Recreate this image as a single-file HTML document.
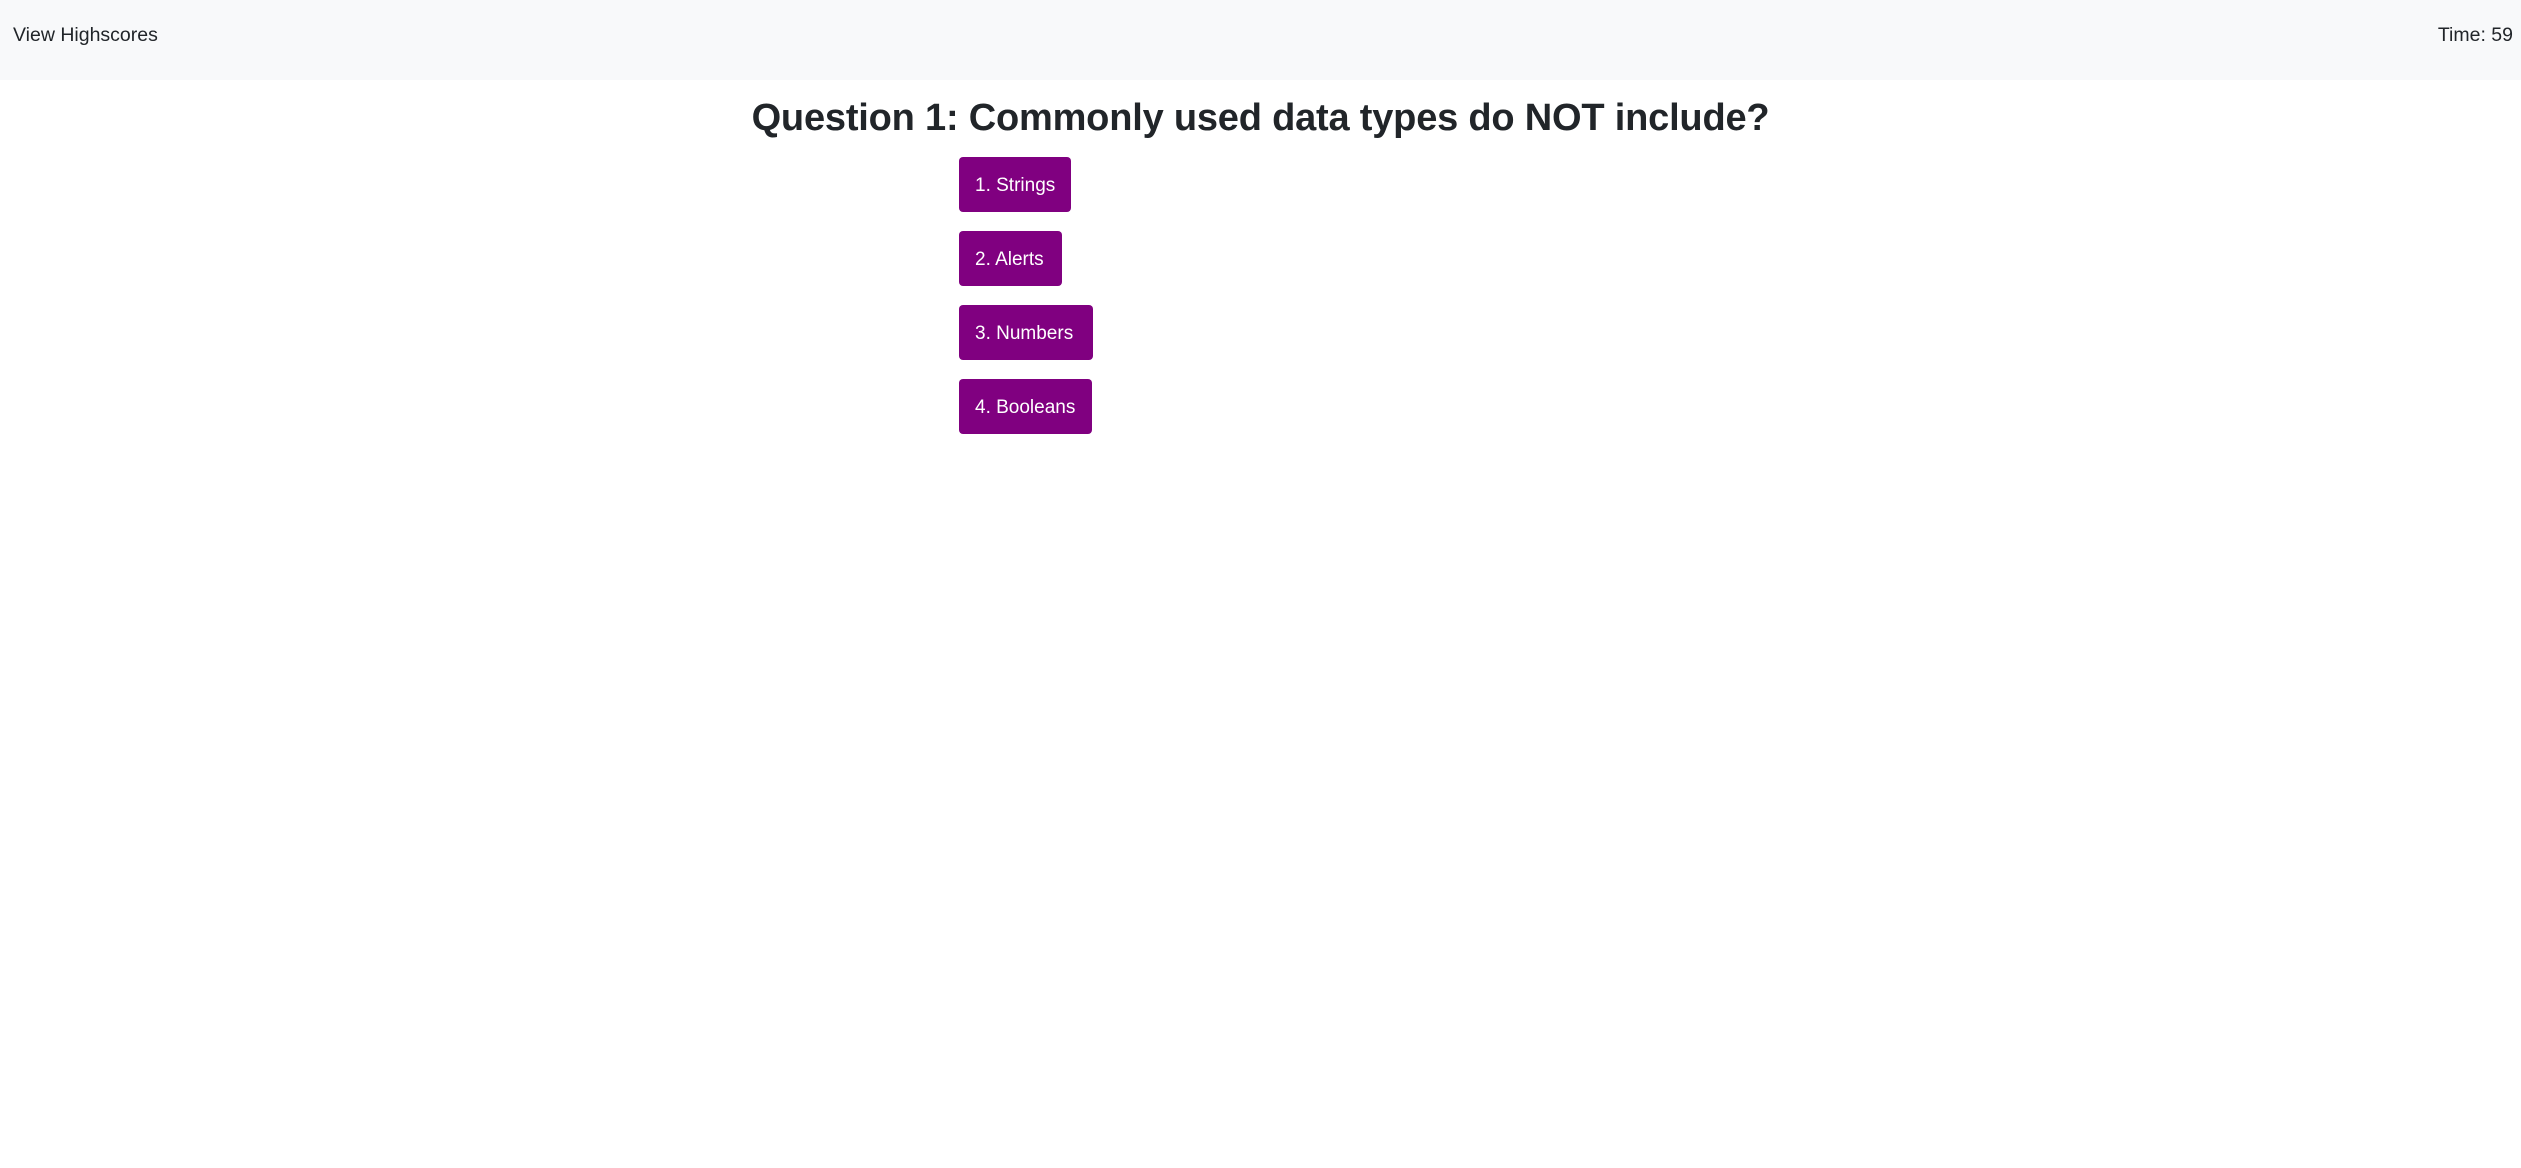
<!DOCTYPE html>
<html><head><meta charset="utf-8"><style>
html,body{margin:0;padding:0;width:2521px;height:1168px;background:#fff;overflow:hidden;font-family:"Liberation Sans",sans-serif;color:#212529}
.nav{position:absolute;left:0;top:0;width:2521px;height:80px;background:#f8f9fa}
.nav .l{position:absolute;left:13px;top:22px;font-size:19.5px;line-height:26px}
.nav .r{position:absolute;right:8px;top:22px;font-size:19.5px;line-height:26px}
h1{position:absolute;left:0;width:2521px;top:90px;margin:0;text-align:center;font-size:38px;font-weight:bold;letter-spacing:-0.2px;line-height:56px}
.b{position:absolute;left:959px;height:55px;background:#800080;color:#fff;border-radius:4px;font-size:19px;line-height:57px;padding:0 16px;box-sizing:border-box;white-space:nowrap}
</style></head><body>
<div class="nav"><div class="l">View Highscores</div><div class="r">Time: 59</div></div>
<h1>Question 1: Commonly used data types do NOT include?</h1>
<div class="b" style="top:157px;width:112px">1. Strings</div>
<div class="b" style="top:231px;width:103px">2. Alerts</div>
<div class="b" style="top:305px;width:134px">3. Numbers</div>
<div class="b" style="top:379px;width:133px">4. Booleans</div>
</body></html>
